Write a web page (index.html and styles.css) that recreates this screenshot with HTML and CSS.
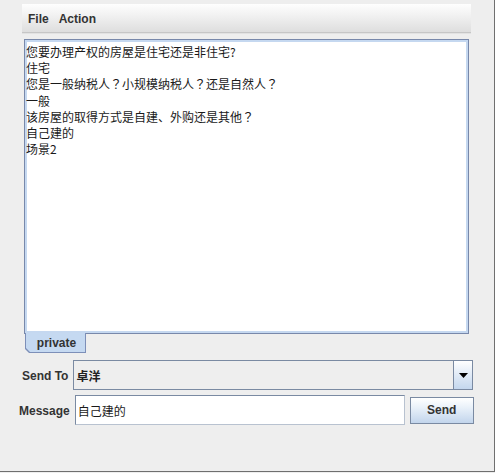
FILE: index.html
```html
<!DOCTYPE html>
<html>
<head>
<meta charset="utf-8">
<link rel="stylesheet" href="styles.css">
</head>
<body>
<div class="frame">
  <div class="menubar">
    <span class="menu menu-file">File</span>
    <span class="menu">Action</span>
  </div>
  <div class="textarea">
    <div class="line">您要办理产权的房屋是住宅还是非住宅?</div>
    <div class="line">住宅</div>
    <div class="line">您是一般纳税人<span class="fw">？</span>小规模纳税人<span class="fw">？</span>还是自然人<span class="fw">？</span></div>
    <div class="line">一般</div>
    <div class="line">该房屋的取得方式是自建、外购还是其他<span class="fw">？</span></div>
    <div class="line">自己建的</div>
    <div class="line">场景2</div>
  </div>
  <div class="tab"><div class="tab-inner">private</div></div>
  <div class="row row-send">
    <span class="label">Send To</span>
    <div class="combo">
      <span class="combo-value">卓洋</span>
      <span class="combo-arrow"><svg width="9" height="5" viewBox="0 0 9 5"><path d="M0 0H9L4.5 5Z" fill="#000"/></svg></span>
    </div>
  </div>
  <div class="row row-msg">
    <span class="label">Message</span>
    <div class="field">自己建的</div>
    <button class="btn">Send</button>
  </div>
</div>
</body>
</html>
```
FILE: styles.css
```css
html, body {
  margin: 0;
  padding: 0;
  background: #eeeeee;
}
.frame {
  box-sizing: border-box;
  width: 495px;
  height: 472px;
  border-right: 1px solid #6f6f6f;
  border-bottom: 1px solid #6f6f6f;
  padding: 4px 0 0 22px;
  font-family: "Liberation Sans", Arial, sans-serif;
  font-size: 12px;
  color: #333333;
}
.menubar {
  box-sizing: border-box;
  width: 449px;
  height: 29px;
  background: linear-gradient(#fefefe, #f3f3f3 35%, #dedede);
  border-bottom: 1px solid #c6c6c6;
  box-shadow: 0 1px 0 #e2e2e2;
  display: flex;
  align-items: center;
  padding-left: 6px;
  padding-top: 1px;
}
.menu {
  font-weight: bold;
  color: #333333;
}
.menu-file { margin-right: 10px; }
.textarea {
  box-sizing: border-box;
  width: 445px;
  height: 295px;
  margin: 6px 0 0 2px;
  background: #ffffff;
  border: 1px solid #7888aa;
  box-shadow: inset 0 0 0 2px #c5d8f0;
  padding: 4px 2px 0 1px;
  font-family: "Noto Sans CJK SC", "Liberation Sans", sans-serif;
  font-size: 12px;
  line-height: 16.2px;
  color: #1a1a1a;
}
.line { height: 16.2px; white-space: nowrap; }
.fw { font-family: "Noto Sans CJK JP", "Noto Sans CJK SC", sans-serif; }
.tab {
  width: 61px;
  height: 20px;
  margin: -1px 0 0 3px;
  background: #7d8fb8;
  padding: 0 1px 1px 1px;
  box-sizing: border-box;
  clip-path: polygon(0 0, 100% 0, 100% 100%, 4px 100%, 0 calc(100% - 4px));
}
.tab-inner {
  height: 100%;
  background: #c5d9f1;
  clip-path: polygon(0 0, 100% 0, 100% 100%, 4px 100%, 0 calc(100% - 4px));
  font-weight: bold;
  color: #333333;
  text-align: center;
  line-height: 21px;
  padding-left: 2px;
}
.row {
  display: flex;
  align-items: center;
}
.row-send {
  margin-top: 7px;
  height: 30px;
}
.row-msg {
  margin-top: 5px;
  height: 30px;
  margin-left: -3px;
}
.label {
  font-weight: bold;
  color: #333333;
  margin-right: 5px;
  padding-top: 1px;
}
.combo {
  box-sizing: border-box;
  width: 400px;
  height: 30px;
  border: 1px solid #7a8aa2;
  background: #eeeeee;
  display: flex;
  align-items: stretch;
}
.combo-value {
  flex: 1;
  display: flex;
  align-items: center;
  padding-left: 2px;
  font-family: "Noto Sans CJK SC", sans-serif;
  font-weight: bold;
  font-size: 12px;
  color: #222222;
  border-right: 1px solid #7a8aa2;
}
.combo-arrow {
  width: 18px;
  background: linear-gradient(#ffffff, #e6eef8 40%, #c4d7ee);
  display: flex;
  align-items: center;
  justify-content: center;
}
.field {
  box-sizing: border-box;
  width: 330px;
  height: 30px;
  background: #ffffff;
  border: 1px solid #7a8aa2;
  border-right-color: #b8c2d0;
  border-bottom-color: #b8c2d0;
  font-family: "Noto Sans CJK SC", sans-serif;
  font-size: 12px;
  color: #1a1a1a;
  padding-left: 2px;
  display: flex;
  align-items: center;
}
.btn {
  box-sizing: border-box;
  width: 64px;
  height: 27px;
  margin-left: 5px;
  border: 1px solid #7a8aa2;
  background: linear-gradient(#ffffff, #e8f0f9 40%, #c2d5ec);
  font-family: "Liberation Sans", Arial, sans-serif;
  font-weight: bold;
  font-size: 12px;
  color: #333333;
  padding: 0;
}
```
